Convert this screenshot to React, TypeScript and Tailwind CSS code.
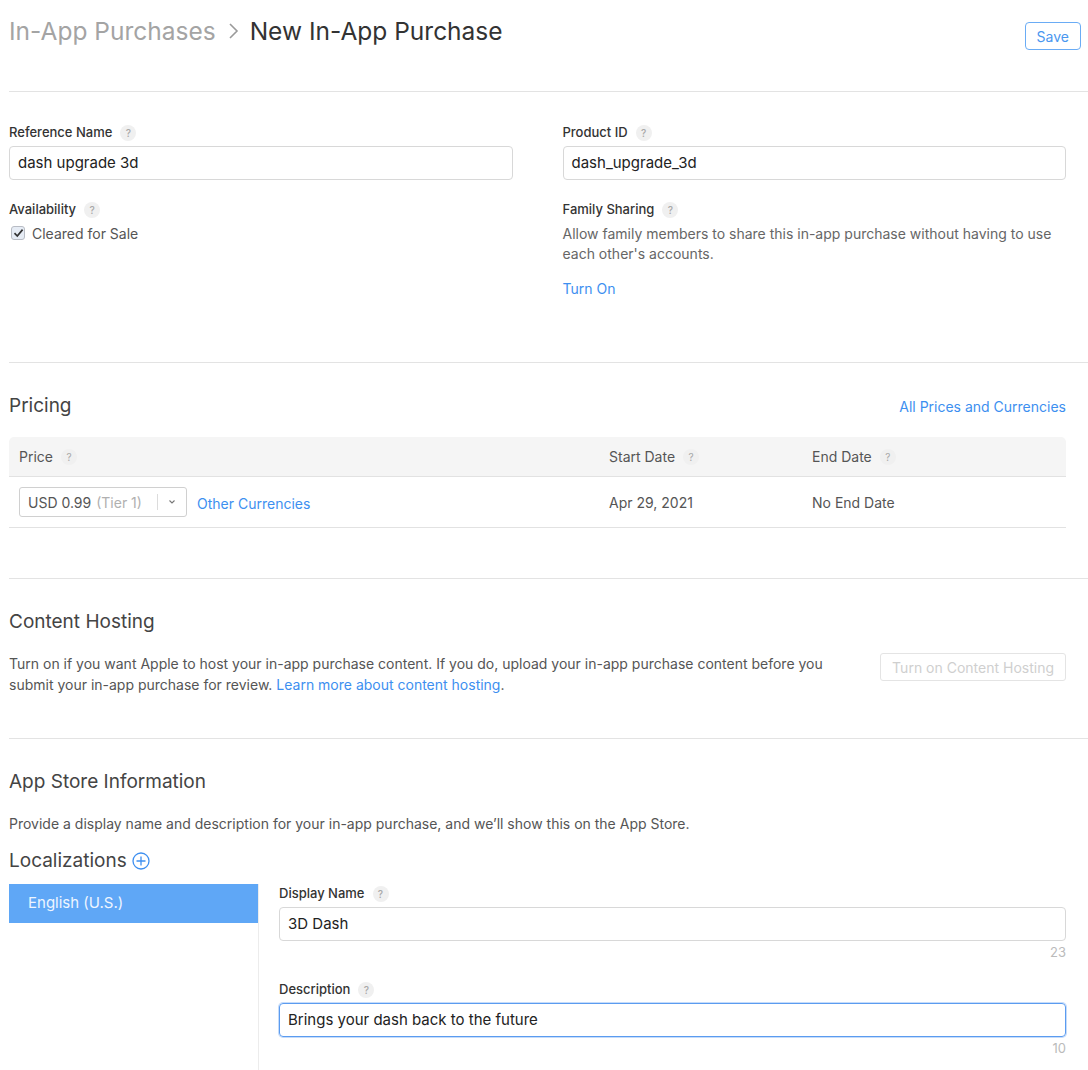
import React from 'react'

const font = { fontFamily: 'Inter, "Noto Sans", sans-serif' }

function Help() {
  return (
    <span className="ml-[8px] inline-flex h-[16px] w-[16px] items-center justify-center rounded-full bg-[#f0f0f0] text-[10px] leading-none text-[#a8a8a8]">
      ?
    </span>
  )
}

function Label({ children }: { children: React.ReactNode }) {
  return (
    <div className="flex h-[18px] items-center text-[13px] font-medium text-[#333]">
      {children}
      <Help />
    </div>
  )
}

function TextField({ value, focused }: { value: string; focused?: boolean }) {
  return (
    <div
      className={
        focused
          ? 'mt-[4px] flex h-[34px] items-center rounded-[4px] border border-[#5b9cf0] px-[8px] text-[15px] text-[#222] shadow-[0_0_0_1px_rgba(91,156,240,0.35)]'
          : 'mt-[4px] flex h-[34px] items-center rounded-[4px] border border-[#d8d8d8] px-[8px] text-[15px] text-[#222]'
      }
    >
      {value}
    </div>
  )
}

export default function App() {
  return (
    <div style={font} className="min-h-[1070px] bg-white pl-[9px] text-[#333]">
      {/* header */}
      <div className="flex h-[92px] items-start justify-between border-b border-[#e3e3e3] pr-[7px] pt-[15px]">
        <div className="flex items-center text-[24.5px] leading-[32px]">
          <span className="text-[#a4a4a4]">In-App Purchases</span>
          <svg className="mx-[11px]" width="12" height="18" viewBox="0 0 12 18" fill="none">
            <path d="M3 2l7 7-7 7" stroke="#9a9a9a" strokeWidth="1.6" />
          </svg>
          <span className="text-[#333]">New In-App Purchase</span>
        </div>
        <button className="mt-[7px] h-[28px] rounded-[4px] border border-[#6aacf5] px-[11px] text-[14px] text-[#4a97ef]">
          Save
        </button>
      </div>

      {/* general */}
      <div className="border-b border-[#e3e3e3] pb-[63px] pr-[22px] pt-[32px]">
        <div className="grid grid-cols-2 gap-x-[50px]">
          <div className="flex flex-col">
            <Label>Reference Name</Label>
            <TextField value="dash upgrade 3d" />
            <div className="mt-[21px]">
              <Label>Availability</Label>
            </div>
            <div className="mt-[4px] flex h-[20px] items-center pl-[2px] text-[14px] text-[#555]">
              <span className="flex h-[14px] w-[14px] items-center justify-center rounded-[3px] border border-[#b8bcc4] bg-[#e6ecf5]">
                <svg width="11" height="10" viewBox="0 0 11 10" fill="none">
                  <path d="M1.5 5.2l2.8 2.8L9.6 1.6" stroke="#333" strokeWidth="1.7" />
                </svg>
              </span>
              <span className="ml-[7px]">Cleared for Sale</span>
            </div>
          </div>
          <div className="flex flex-col">
            <Label>Product ID</Label>
            <TextField value="dash_upgrade_3d" />
            <div className="mt-[21px]">
              <Label>Family Sharing</Label>
            </div>
            <p className="mt-[5px] text-[14px] leading-[20px] text-[#666]">
              Allow family members to share this in-app purchase without having to use each other's accounts.
            </p>
            <a className="mt-[15px] text-[14px] leading-[20px] text-[#3d8ff0]">Turn On</a>
          </div>
        </div>
      </div>

      {/* pricing */}
      <div className="border-b border-[#e3e3e3] pb-[50px] pr-[22px] pt-[29px]">
        <div className="flex items-center justify-between">
          <h2 className="text-[19px] leading-[28px] text-[#444]">Pricing</h2>
          <a className="text-[14px] text-[#3d8ff0]">All Prices and Currencies</a>
        </div>
        <div className="mt-[17px]">
          <div className="grid h-[40px] grid-cols-[590px_203px_1fr] items-center rounded-t-[5px] border-b border-[#e2e2e2] bg-[#f5f5f5] pl-[10px] text-[14px] text-[#555]">
            <div className="flex items-center">Price<Help /></div>
            <div className="flex items-center">Start Date<Help /></div>
            <div className="flex items-center">End Date<Help /></div>
          </div>
          <div className="grid h-[51px] grid-cols-[590px_203px_1fr] items-center border-b border-[#e2e2e2] pl-[10px] text-[14px] text-[#555]">
            <div className="flex items-center">
              <div className="flex h-[30px] w-[168px] items-center rounded-[3px] border border-[#d0d0d0] pl-[8px]">
                <span className="text-[#555]">USD 0.99</span>
                <span className="ml-[5px] text-[#b0b0b0]">(Tier 1)</span>
                <span className="ml-auto h-[16px] w-px bg-[#dcdcdc]" />
                <svg className="mx-[10px]" width="8" height="6" viewBox="0 0 8 6" fill="none">
                  <path d="M1.5 1.5L4 4l2.5-2.5" stroke="#777" strokeWidth="1.1" />
                </svg>
              </div>
              <a className="ml-[10px] mt-[2px] text-[#3d8ff0]">Other Currencies</a>
            </div>
            <div>Apr 29, 2021</div>
            <div>No End Date</div>
          </div>
        </div>
      </div>

      {/* content hosting */}
      <div className="border-b border-[#e3e3e3] pb-[43px] pr-[22px] pt-[29px]">
        <h2 className="text-[19px] leading-[28px] text-[#444]">Content Hosting</h2>
        <div className="mt-[17px] flex items-start justify-between gap-[30px]">
          <p className="w-[835px] text-[14px] leading-[21px] text-[#555]">
            Turn on if you want Apple to host your in-app purchase content. If you do, upload your in-app purchase content before you submit your in-app purchase for review.{' '}
            <a className="text-[#3d8ff0]">Learn more about content hosting</a>.
          </p>
          <button className="h-[28px] shrink-0 rounded-[3px] border border-[#e4e4e4] px-[11px] text-[14px] text-[#cfcfcf]">
            Turn on Content Hosting
          </button>
        </div>
      </div>

      {/* app store information */}
      <div className="pr-[22px] pt-[29px]">
        <h2 className="text-[19px] leading-[28px] text-[#444]">App Store Information</h2>
        <p className="mt-[17px] text-[14px] leading-[21px] text-[#555]">
          Provide a display name and description for your in-app purchase, and we’ll show this on the App Store.
        </p>
        <div className="mt-[13px] flex items-center">
          <h2 className="text-[19px] leading-[28px] text-[#444]">Localizations</h2>
          <svg className="ml-[5px]" width="18" height="18" viewBox="0 0 18 18" fill="none">
            <circle cx="9" cy="9" r="8" stroke="#3d8ff0" strokeWidth="1.3" />
            <path d="M9 4.5v9M4.5 9h9" stroke="#3d8ff0" strokeWidth="1.3" />
          </svg>
        </div>
        <div className="mt-[9px] flex">
          <div className="min-h-[187px] w-[250px] shrink-0 border-r border-[#ececec]">
            <div className="flex h-[39px] items-center bg-[#5fa7f6] pl-[19px] text-[15px] text-[#eef5ff]">
              English (U.S.)
            </div>
          </div>
          <div className="flex flex-1 flex-col pb-[13px] pl-[20px] pt-[1px]">
            <Label>Display Name</Label>
            <TextField value="3D Dash" />
            <div className="mt-[2px] text-right text-[13px] leading-[18px] text-[#bbb]">23</div>
            <div className="mt-[20px]">
              <Label>Description</Label>
            </div>
            <TextField value="Brings your dash back to the future" focused />
            <div className="mt-[2px] text-right text-[13px] leading-[18px] text-[#bbb]">10</div>
          </div>
        </div>
      </div>
    </div>
  )
}
